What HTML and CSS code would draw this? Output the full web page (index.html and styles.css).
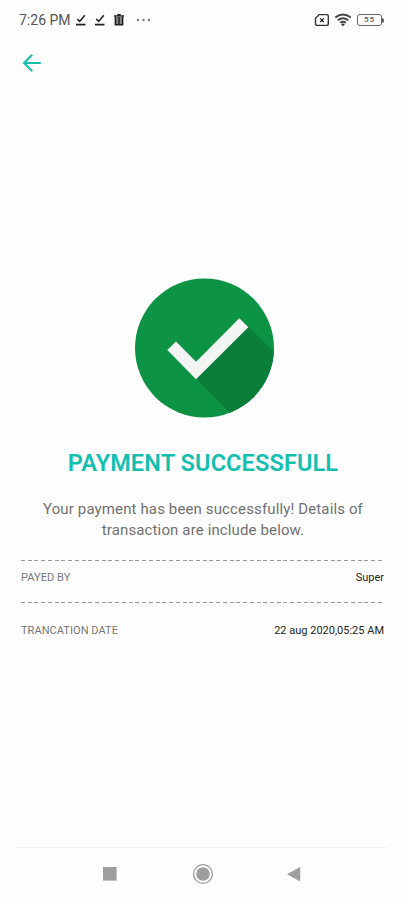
FILE: index.html
```
<!DOCTYPE html>
<html lang="en">
<head>
<meta charset="utf-8">
<title>Payment</title>
<link rel="stylesheet" href="styles.css">
</head>
<body>
<div class="screen">
  <header class="status">
    <span class="time">7:26 PM</span>
    <svg class="tick" viewBox="0 0 12 14"><path d="M2.3 6.2 4.7 8.4 9.8 2.2" fill="none" stroke="#222" stroke-width="1.6"/><path d="M1 11.6h9.5" stroke="#222" stroke-width="1.8"/></svg>
    <svg class="tick" viewBox="0 0 12 14"><path d="M2.3 6.2 4.7 8.4 9.8 2.2" fill="none" stroke="#222" stroke-width="1.6"/><path d="M1 11.6h9.5" stroke="#222" stroke-width="1.8"/></svg>
    <svg class="bin" viewBox="0 0 12 14"><path d="M1 3h10M4.3 1.7h3.4" stroke="#222" stroke-width="1.5"/><path d="M2.4 3.5v8.3h7.2V3.5" fill="#888" stroke="#222" stroke-width="1.6"/><path d="M6 4v7" stroke="#222" stroke-width="1.5"/></svg>
    <svg class="more" viewBox="0 0 16 4"><g fill="#777"><circle cx="2" cy="2" r="1.2"/><circle cx="7.5" cy="2" r="1.2"/><circle cx="13" cy="2" r="1.2"/></g></svg>
    <span class="spacer"></span>
    <svg class="sim" viewBox="0 0 16 14"><path d="M5.2 1.6h7.6q1.5 0 1.5 1.5v7.8q0 1.5-1.5 1.5H3q-1.5 0-1.5-1.5V5.3z" fill="none" stroke="#333" stroke-width="1.4"/><path d="m6.2 5.4 3.6 3.6m0-3.6L6.2 9" stroke="#222" stroke-width="1.3"/></svg>
    <svg class="wifi" viewBox="0 0 18 14"><g fill="none" stroke="#444" stroke-width="2"><path d="M1.3 4.5q7.7-6 15.4 0"/><path d="M3.8 7.2q5.2-4 10.4 0"/><path d="M6.2 9.8q2.8-2.2 5.6 0"/></g><path d="M9 13.2 7 11q2-1.1 4 0z" fill="#333"/></svg>
    <span class="battery"><span class="level">55</span></span>
  </header>
  <nav class="toolbar">
    <svg class="back" viewBox="0 0 20 20"><path d="M18.7 10H2M10.2 1.8 2 10l8.2 8.2" fill="none" stroke="#14bfb2" stroke-width="2"/></svg>
  </nav>
  <main class="content">
    <svg class="badge" viewBox="0 0 140 140">
      <defs><clipPath id="disc"><circle cx="69.5" cy="70" r="69.5"/></clipPath></defs>
      <circle cx="69.5" cy="70" r="69.5" fill="#0c9344"/>
      <path clip-path="url(#disc)" d="M61.2 100.5 113.5 48.5 165 100 165 165 125.7 165z" fill="#087e39"/>
      <path d="m32.3 72 8.7-8.5 20.1 20.2 43.2-43.4 9 9-52.3 52z" fill="#f2f5f1"/>
    </svg>
    <h1 class="title">PAYMENT SUCCESSFULL</h1>
    <p class="message">Your payment has been successfully! Details of<br>transaction are include below.</p>
    <section class="details">
      <div class="rule"></div>
      <div class="row payer"><span class="label">PAYED BY</span><span class="value">Super</span></div>
      <div class="rule"></div>
      <div class="row date"><span class="label">TRANCATION DATE</span><span class="value">22 aug 2020,05:25 AM</span></div>
    </section>
  </main>
  <footer class="navbar">
    <svg viewBox="0 0 22 22"><rect x="4" y="4" width="13.6" height="13.6" fill="#9e9e9e"/></svg>
    <svg viewBox="0 0 22 22"><circle cx="11" cy="11" r="9.4" fill="none" stroke="#999" stroke-width="1.3"/><circle cx="11" cy="11" r="6.8" fill="#9e9e9e"/></svg>
    <svg viewBox="0 0 22 22"><path d="M15.2 4v14.4L2 11.2z" fill="#9e9e9e"/></svg>
  </footer>
</div>
</body>
</html>
```
FILE: styles.css
```
* { box-sizing: border-box; }
body { margin: 0; background: #fefefe; font-family: Roboto, "Liberation Sans", sans-serif; }
.screen { width: 404px; height: 900px; display: flex; flex-direction: column; overflow: hidden; }
.status { height: 40px; padding: 0 20px 0 19px; display: flex; align-items: center; color: #555; }
.time { font-size: 14px; width: 56px; white-space: nowrap; }
.tick { width: 12px; height: 14px; margin-right: 7px; }
.bin { width: 12px; height: 14px; }
.more { width: 16px; height: 4px; margin-left: 11px; }
.spacer { flex: 1; }
.sim { width: 16px; height: 14px; margin-right: 4px; }
.wifi { width: 18px; height: 14px; margin-right: 5px; }
.battery { display: flex; align-items: center; }
.battery::after { content: ""; width: 2px; height: 5px; background: #666; border-radius: 0 2px 2px 0; }
.level { width: 25px; height: 12px; border: 1.5px solid #666; border-radius: 3px; font-size: 8px; line-height: 10px; font-weight: 500; text-align: center; letter-spacing: 1px; }
.toolbar { height: 46px; padding: 0 22px; display: flex; align-items: center; }
.back { width: 20px; height: 20px; }
.content { flex: 1; display: flex; flex-direction: column; align-items: center; padding: 192px 20px 0; }
.badge { width: 140px; height: 140px; margin-left: 5px; flex: none; }
.title { margin: 29px 0 0; padding-left: 2px; font-size: 23.5px; line-height: 32px; font-weight: 600; letter-spacing: .12px; color: #14bfb0; white-space: nowrap; }
.message { margin: 20px 0 0; padding-left: 2px; font-size: 15px; line-height: 21px; color: #707070; text-align: center; letter-spacing: .13px; white-space: nowrap; }
.details { align-self: stretch; margin-top: 19px; }
.rule { height: 1px; width: 362px; margin-left: 1px; background: repeating-linear-gradient(90deg, #999 0 4px, transparent 4px 6.73px); }
.row { display: flex; align-items: center; justify-content: space-between; font-size: 11px; padding-left: 1px; }
.payer { height: 41px; padding-bottom: 8px; }
.date { height: 54px; }
.label { color: #777; letter-spacing: .06px; }
.value { color: #222; }
.navbar { height: 53px; margin: 0 17px; border-top: 1px solid #f2f2f2; display: flex; align-items: center; gap: 71px; padding-left: 82px; }
.navbar svg { width: 22px; height: 22px; flex: none; }
```
